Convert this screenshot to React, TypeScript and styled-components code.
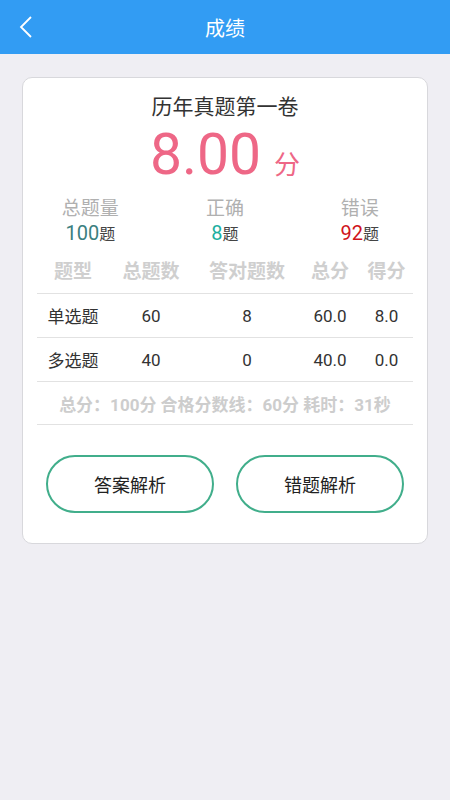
import React from "react";
import styled, { createGlobalStyle } from "styled-components";

const GlobalStyle = createGlobalStyle`
  html, body {
    margin: 0;
    padding: 0;
    background: #efeef3;
    font-family: Roboto, "Noto Sans CJK SC", sans-serif;
  }
`;

const Page = styled.div`
  width: 450px;
  min-height: 800px;
  background: #efeef3;
`;

const Header = styled.header`
  height: 54px;
  background: #329cf3;
  display: flex;
  align-items: center;
  justify-content: center;
  position: relative;
  color: #fff;
  font-size: 20px;
  font-family: "Noto Sans CJK SC", sans-serif;
`;

const BackButton = styled.div`
  position: absolute;
  left: 18px;
  top: 15px;
  width: 18px;
  height: 24px;
  display: flex;
`;

const Body = styled.main`
  padding: 23px 22px 0;
`;

const Card = styled.section`
  background: #fff;
  border: 1px solid #d8d8dc;
  border-radius: 10px;
  padding: 12px 14px 30px;
  display: flex;
  flex-direction: column;
  align-items: center;
`;

const PaperTitle = styled.h2`
  margin: 0;
  font-weight: 400;
  font-size: 21px;
  line-height: 30px;
  color: #333;
  font-family: "Noto Sans CJK SC", sans-serif;
`;

const ScoreRow = styled.div`
  display: flex;
  align-items: baseline;
  color: #ee6786;
  margin-top: 3px;
`;

const ScoreValue = styled.span`
  font-family: Roboto, sans-serif;
  font-size: 57px;
  line-height: 64px;
`;

const ScoreUnit = styled.span`
  font-size: 26px;
  margin-left: 13px;
  font-family: "Noto Sans CJK SC", sans-serif;
`;

const Stats = styled.div`
  width: calc(100% + 28px);
  margin: 7px -14px 0;
  display: grid;
  grid-template-columns: 1fr 1fr 1fr;
`;

const Stat = styled.div`
  display: flex;
  flex-direction: column;
  align-items: center;
`;

const StatLabel = styled.span`
  font-size: 19px;
  line-height: 26px;
  color: #b0b0b0;
  font-family: "Noto Sans CJK SC", sans-serif;
`;

const StatValue = styled.span<{ $color: string }>`
  color: ${(p) => p.$color};
  font-size: 20px;
  line-height: 26px;
  font-family: Roboto, sans-serif;
  small {
    font-size: 16px;
    color: #444;
    font-family: "Noto Sans CJK SC", sans-serif;
  }
`;

const Table = styled.div`
  width: 100%;
  display: flex;
  flex-direction: column;
`;

const Row = styled.div<{ $head?: boolean }>`
  display: grid;
  grid-template-columns: 72px 84px 108px 58px 55px;
  align-items: center;
  height: ${(p) => (p.$head ? "47px" : "43px")};
  border-bottom: 1px solid #e2e2e2;
  font-family: ${(p) => (p.$head ? '"Noto Sans CJK SC", sans-serif' : 'Roboto, "Noto Sans CJK SC", sans-serif')};
  font-size: ${(p) => (p.$head ? "19px" : "17px")};
  font-weight: ${(p) => (p.$head ? 700 : 400)};
  color: ${(p) => (p.$head ? "#cfcfcf" : "#333")};
`;

const Cell = styled.span`
  text-align: center;
  white-space: nowrap;
`;

const Summary = styled.div`
  height: 42px;
  border-bottom: 1px solid #e2e2e2;
  display: flex;
  align-items: center;
  justify-content: center;
  color: #cdcdcd;
  font-size: 17px;
  font-weight: 700;
  font-family: Roboto, "Noto Sans CJK SC", sans-serif;
`;

const Actions = styled.div`
  width: 100%;
  display: flex;
  justify-content: space-between;
  padding: 30px 9px 0;
  box-sizing: border-box;
`;

const ActionButton = styled.button`
  width: 168px;
  height: 58px;
  border: 2px solid #41ae8b;
  border-radius: 29px;
  background: #fff;
  color: #222;
  font-size: 18px;
  font-family: "Noto Sans CJK SC", sans-serif;
  cursor: pointer;
`;

const rows = [
  ["单选题", "60", "8", "60.0", "8.0"],
  ["多选题", "40", "0", "40.0", "0.0"],
];

export default function App() {
  return (
    <Page>
      <GlobalStyle />
      <Header>
        <BackButton>
          <svg width="18" height="24" viewBox="0 0 18 24">
            <path d="M13 2 L3 12 L13 22" fill="none" stroke="#fff" strokeWidth="1.8" />
          </svg>
        </BackButton>
        成绩
      </Header>
      <Body>
        <Card>
          <PaperTitle>历年真题第一卷</PaperTitle>
          <ScoreRow>
            <ScoreValue>8.00</ScoreValue>
            <ScoreUnit>分</ScoreUnit>
          </ScoreRow>
          <Stats>
            <Stat>
              <StatLabel>总题量</StatLabel>
              <StatValue $color="#3b7f80">
                100<small>题</small>
              </StatValue>
            </Stat>
            <Stat>
              <StatLabel>正确</StatLabel>
              <StatValue $color="#1cafa1">
                8<small>题</small>
              </StatValue>
            </Stat>
            <Stat>
              <StatLabel>错误</StatLabel>
              <StatValue $color="#d0141c">
                92<small>题</small>
              </StatValue>
            </Stat>
          </Stats>
          <Table>
            <Row $head>
              <Cell>题型</Cell>
              <Cell>总题数</Cell>
              <Cell>答对题数</Cell>
              <Cell>总分</Cell>
              <Cell>得分</Cell>
            </Row>
            {rows.map((r) => (
              <Row key={r[0]}>
                {r.map((c, i) => (
                  <Cell key={i}>{c}</Cell>
                ))}
              </Row>
            ))}
            <Summary>总分：100分 合格分数线：60分 耗时：31秒</Summary>
          </Table>
          <Actions>
            <ActionButton>答案解析</ActionButton>
            <ActionButton>错题解析</ActionButton>
          </Actions>
        </Card>
      </Body>
    </Page>
  );
}
